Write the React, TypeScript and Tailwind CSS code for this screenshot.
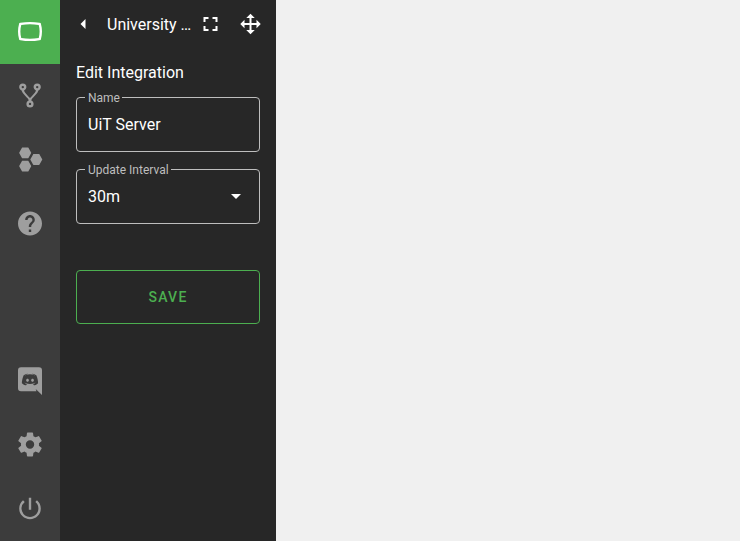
import type { ReactNode } from 'react';
import { MdHelp, MdOutlinePanoramaWideAngle, MdPowerSettingsNew } from 'react-icons/md';

const paths = {
  fork: 'M6,2A3,3 0 0,1 9,5C9,6.28 8.19,7.38 7.06,7.81C7.15,8.27 7.39,8.83 8,9.63C9,10.92 11,12.83 12,14.17C13,12.83 15,10.92 16,9.63C16.61,8.83 16.85,8.27 16.94,7.81C15.81,7.38 15,6.28 15,5A3,3 0 0,1 18,2A3,3 0 0,1 21,5C21,6.32 20.14,7.45 18.95,7.85C18.87,8.37 18.64,9 18,9.83C17,11.17 15,13.08 14,14.38C13.39,15.17 13.15,15.73 13.06,16.19C14.19,16.62 15,17.72 15,19A3,3 0 0,1 12,22A3,3 0 0,1 9,19C9,17.72 9.81,16.62 10.94,16.19C10.85,15.73 10.61,15.17 10,14.38C9,13.08 7,11.17 6,9.83C5.36,9 5.13,8.37 5.05,7.85C3.86,7.45 3,6.32 3,5A3,3 0 0,1 6,2M6,4A1,1 0 0,0 5,5A1,1 0 0,0 6,6A1,1 0 0,0 7,5A1,1 0 0,0 6,4M18,4A1,1 0 0,0 17,5A1,1 0 0,0 18,6A1,1 0 0,0 19,5A1,1 0 0,0 18,4M12,18A1,1 0 0,0 11,19A1,1 0 0,0 12,20A1,1 0 0,0 13,19A1,1 0 0,0 12,18Z',
  hexagons:
    'M10.25,2C10.44,2 10.61,2.11 10.69,2.26L12.91,6.22L13,6.5L12.91,6.78L10.69,10.74C10.61,10.89 10.44,11 10.25,11H5.75C5.56,11 5.39,10.89 5.31,10.74L3.09,6.78L3,6.5L3.09,6.22L5.31,2.26C5.39,2.11 5.56,2 5.75,2H10.25M10.25,13C10.44,13 10.61,13.11 10.69,13.26L12.91,17.22L13,17.5L12.91,17.78L10.69,21.74C10.61,21.89 10.44,22 10.25,22H5.75C5.56,22 5.39,21.89 5.31,21.74L3.09,17.78L3,17.5L3.09,17.22L5.31,13.26C5.39,13.11 5.56,13 5.75,13H10.25M19.5,7.5C19.69,7.5 19.86,7.61 19.94,7.76L22.16,11.72L22.25,12L22.16,12.28L19.94,16.24C19.86,16.39 19.69,16.5 19.5,16.5H15C14.81,16.5 14.64,16.39 14.56,16.24L12.34,12.28L12.25,12L12.34,11.72L14.56,7.76C14.64,7.61 14.81,7.5 15,7.5H19.5Z',
  discord:
    'M22,24L16.75,19L17.38,21H4.5A2.5,2.5 0 0,1 2,18.5V3.5A2.5,2.5 0 0,1 4.5,1H19.5A2.5,2.5 0 0,1 22,3.5V24M12,6.8C9.32,6.8 7.44,7.95 7.44,7.95C8.47,7.03 10.27,6.5 10.27,6.5L10.1,6.33C8.41,6.36 6.88,7.53 6.88,7.53C5.16,11.12 5.27,14.22 5.27,14.22C6.67,16.03 8.75,15.9 8.75,15.9L9.46,15C8.21,14.73 7.42,13.62 7.42,13.62C7.42,13.62 9.3,14.9 12,14.9C14.7,14.9 16.58,13.62 16.58,13.62C16.58,13.62 15.79,14.73 14.54,15L15.25,15.9C15.25,15.9 17.33,16.03 18.73,14.22C18.73,14.22 18.84,11.12 17.12,7.53C17.12,7.53 15.59,6.36 13.9,6.33L13.73,6.5C13.73,6.5 15.53,7.03 16.56,7.95C16.56,7.95 14.68,6.8 12,6.8M9.93,10.59C10.58,10.59 11.11,11.16 11.1,11.86C11.1,12.55 10.58,13.13 9.93,13.13C9.29,13.13 8.77,12.55 8.77,11.86C8.77,11.16 9.28,10.59 9.93,10.59M14.1,10.59C14.75,10.59 15.27,11.16 15.27,11.86C15.27,12.55 14.75,13.13 14.1,13.13C13.46,13.13 12.94,12.55 12.94,11.86C12.94,11.16 13.45,10.59 14.1,10.59Z',
  cog: 'M12,15.5A3.5,3.5 0 0,1 8.5,12A3.5,3.5 0 0,1 12,8.5A3.5,3.5 0 0,1 15.5,12A3.5,3.5 0 0,1 12,15.5M19.43,12.97C19.47,12.65 19.5,12.33 19.5,12C19.5,11.67 19.47,11.34 19.43,11L21.54,9.37C21.73,9.22 21.78,8.95 21.66,8.73L19.66,5.27C19.54,5.05 19.27,4.96 19.05,5.05L16.56,6.05C16.04,5.66 15.5,5.32 14.87,5.07L14.5,2.42C14.46,2.18 14.25,2 14,2H10C9.75,2 9.54,2.18 9.5,2.42L9.13,5.07C8.5,5.32 7.96,5.66 7.44,6.05L4.95,5.05C4.73,4.96 4.46,5.05 4.34,5.27L2.34,8.73C2.21,8.95 2.27,9.22 2.46,9.37L4.57,11C4.53,11.34 4.5,11.67 4.5,12C4.5,12.33 4.53,12.65 4.57,12.97L2.46,14.63C2.27,14.78 2.21,15.05 2.34,15.27L4.34,18.73C4.46,18.95 4.73,19.03 4.95,18.95L7.44,17.94C7.96,18.34 8.5,18.68 9.13,18.93L9.5,21.58C9.54,21.82 9.75,22 10,22H14C14.25,22 14.46,21.82 14.5,21.58L14.87,18.93C15.5,18.67 16.04,18.34 16.56,17.94L19.05,18.95C19.27,19.03 19.54,18.95 19.66,18.73L21.66,15.27C21.78,15.05 21.73,14.78 21.54,14.63L19.43,12.97Z',
  left: 'M14,7L9,12L14,17V7Z',
  down: 'M7,10L12,15L17,10H7Z',
  fullscreen: 'M5,5H10V7H7V10H5V5M14,5H19V10H17V7H14V5M17,14H19V19H14V17H17V14M10,17V19H5V14H7V17H10Z',
  move: 'M13,6V11H18V7.75L22.25,12L18,16.25V13H13V18H16.25L12,22.25L7.75,18H11V13H6V16.25L1.75,12L6,7.75V11H11V6H7.75L12,1.75L16.25,6H13Z',
};

// Rail icons are drawn at 1.2x inside a 30px box.
const RAIL_BOX = '-0.5 -0.9 25 25';
const HEADER_BOX = '-0.5 0 24 24';

interface IconProps {
  name: keyof typeof paths;
  className?: string;
  viewBox?: string;
}

function Icon({ name, className = 'size-6', viewBox = '0 0 24 24' }: IconProps) {
  return (
    <svg viewBox={viewBox} fill="currentColor" className={`${className} shrink-0`}>
      <path fillRule="evenodd" d={paths[name]} />
    </svg>
  );
}

function RailButton({ label, active, children }: { label: string; active?: boolean; children: ReactNode }) {
  return (
    <button
      aria-label={label}
      className={`flex h-16 w-full items-center justify-center pb-0.5 ${active ? 'bg-[#4caf50] text-white' : 'text-[#9e9e9e]'}`}
    >
      {children}
    </button>
  );
}

function Field({ label, value, children }: { label: string; value: string; children?: ReactNode }) {
  return (
    <div className="relative flex h-[55px] items-center justify-between rounded-[4px] border border-[#bebebe] px-[11px] text-base">
      <span className="absolute -top-2 left-2 bg-[#272727] pr-[2px] pl-[3px] text-xs leading-4 text-[#bebebe]">{label}</span>
      <span className="leading-6">{value}</span>
      {children}
    </div>
  );
}

export default function App() {
  return (
    <div className="flex h-screen w-full overflow-hidden bg-[#f0f0f0] font-[Roboto,sans-serif] text-white">
      <nav className="flex w-[60px] shrink-0 flex-col justify-between bg-[#3c3c3c]">
        <div>
          <RailButton label="Views" active>
            <MdOutlinePanoramaWideAngle viewBox={RAIL_BOX} className="size-[30px]" />
          </RailButton>
          <RailButton label="Sources">
            <Icon name="fork" viewBox={RAIL_BOX} className="size-[30px]" />
          </RailButton>
          <RailButton label="Plugins">
            <Icon name="hexagons" viewBox={RAIL_BOX} className="size-[30px]" />
          </RailButton>
          <RailButton label="Help">
            <MdHelp viewBox={RAIL_BOX} className="size-[30px]" />
          </RailButton>
        </div>
        <div>
          <RailButton label="Discord">
            <Icon name="discord" viewBox={RAIL_BOX} className="size-[30px]" />
          </RailButton>
          <RailButton label="Settings">
            <Icon name="cog" viewBox={RAIL_BOX} className="size-[30px]" />
          </RailButton>
          <RailButton label="Power">
            <MdPowerSettingsNew viewBox={RAIL_BOX} className="size-[30px]" />
          </RailButton>
        </div>
      </nav>
      <aside className="w-[216px] shrink-0 bg-[#272727]">
        <header className="flex h-12 items-center pr-[13px] pl-[11px]">
          <Icon name="left" viewBox={HEADER_BOX} />
          <h1 className="ml-3 w-[88px] truncate pt-0.5 text-base">University Campus</h1>
          <Icon name="fullscreen" viewBox={HEADER_BOX} className="ml-[3px] size-6" />
          <Icon name="move" viewBox={HEADER_BOX} className="ml-4 size-6" />
        </header>
        <main className="px-4 pt-[13px]">
          <h2 className="text-base leading-6">Edit Integration</h2>
          <div className="mt-3 flex flex-col gap-[17px]">
            <Field label="Name" value="UiT Server" />
            <Field label="Update Interval" value="30m">
              <Icon name="down" className="mb-0.5 size-6" />
            </Field>
          </div>
          <button className="mt-[46px] flex h-[54px] w-full items-center justify-center rounded-[4px] border border-[#4caf50] text-sm font-medium tracking-[1.25px] text-[#4caf50]">
            SAVE
          </button>
        </main>
      </aside>
    </div>
  );
}
